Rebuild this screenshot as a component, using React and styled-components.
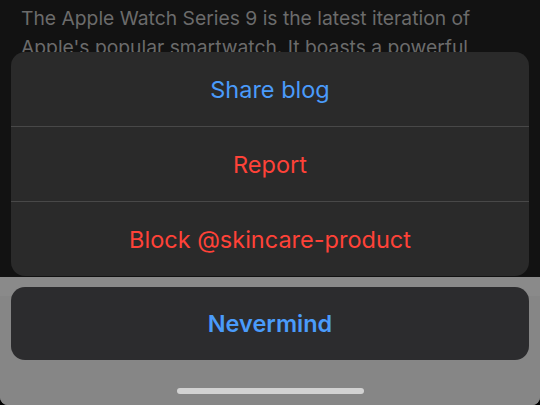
import React from 'react';
import styled, { createGlobalStyle } from 'styled-components';

const GlobalStyle = createGlobalStyle`
    html, body {
        margin: 0;
        padding: 0;
        background: #000;
    }
    body {
        font-family: Inter, "Noto Sans", sans-serif;
        -webkit-font-smoothing: antialiased;
    }
`;

const actions = [
    { label: 'Share blog', tone: 'blue' },
    { label: 'Report', tone: 'red' },
    { label: 'Block @skincare-product', tone: 'red' },
];

const App = () => {
    return (
        <Screen>
            <GlobalStyle />
            <DarkArea>
                <Article>
                    The Apple Watch Series 9 is the latest iteration of
                    Apple's popular smartwatch. It boasts a powerful
                </Article>
                <ActionGroup>
                    {actions.map((action, i) => (
                        <ActionRow key={action.label} divided={i > 0}>
                            <ActionLabel tone={action.tone}>{action.label}</ActionLabel>
                        </ActionRow>
                    ))}
                </ActionGroup>
            </DarkArea>
            <GreyArea>
                <CancelButton>Nevermind</CancelButton>
                <HomeIndicator />
            </GreyArea>
        </Screen>
    );
};

export default App;

const Screen = styled.div`
    width: 540px;
    height: 405px;
    display: flex;
    flex-direction: column;
    overflow: hidden;
    border-radius: 0 0 8px 8px;
    background: #878787;
`;

const DarkArea = styled.div`
    height: 277px;
    flex-shrink: 0;
    background: #121212;
    display: flex;
    flex-direction: column;
    padding: 0 11px;
    box-sizing: border-box;
`;

const Article = styled.p`
    margin: 0;
    height: 52px;
    box-sizing: border-box;
    overflow: hidden;
    padding: 4px 10px 0;
    font-size: 19.3px;
    line-height: 29px;
    color: #6b6b6b;
`;

const ActionGroup = styled.div`
    height: 224px;
    background: #2a2a2a;
    border-radius: 14px;
    display: flex;
    flex-direction: column;
    overflow: hidden;
`;

const ActionRow = styled.div`
    flex: 1;
    display: flex;
    align-items: center;
    justify-content: center;
    border-top: ${props => (props.divided ? '1px solid #484848' : 'none')};
`;

const ActionLabel = styled.span`
    font-size: 23.5px;
    color: ${props => (props.tone === 'red' ? '#ff4238' : '#4a9bfa')};
`;

const GreyArea = styled.div`
    flex: 1;
    display: flex;
    flex-direction: column;
    align-items: center;
    padding: 10px 11px 0;
    background: linear-gradient(#8a8a8a 0, #8a8a8a 19px, #868686 19px);
`;

const CancelButton = styled.div`
    width: 100%;
    height: 73px;
    background: #2c2c2e;
    border-radius: 14px;
    display: flex;
    align-items: center;
    justify-content: center;
    font-size: 23.5px;
    font-weight: 600;
    color: #4a9bfa;
`;

const HomeIndicator = styled.div`
    width: 187px;
    height: 6px;
    margin-top: 28px;
    border-radius: 3px;
    background: #d2d2d2;
`;
